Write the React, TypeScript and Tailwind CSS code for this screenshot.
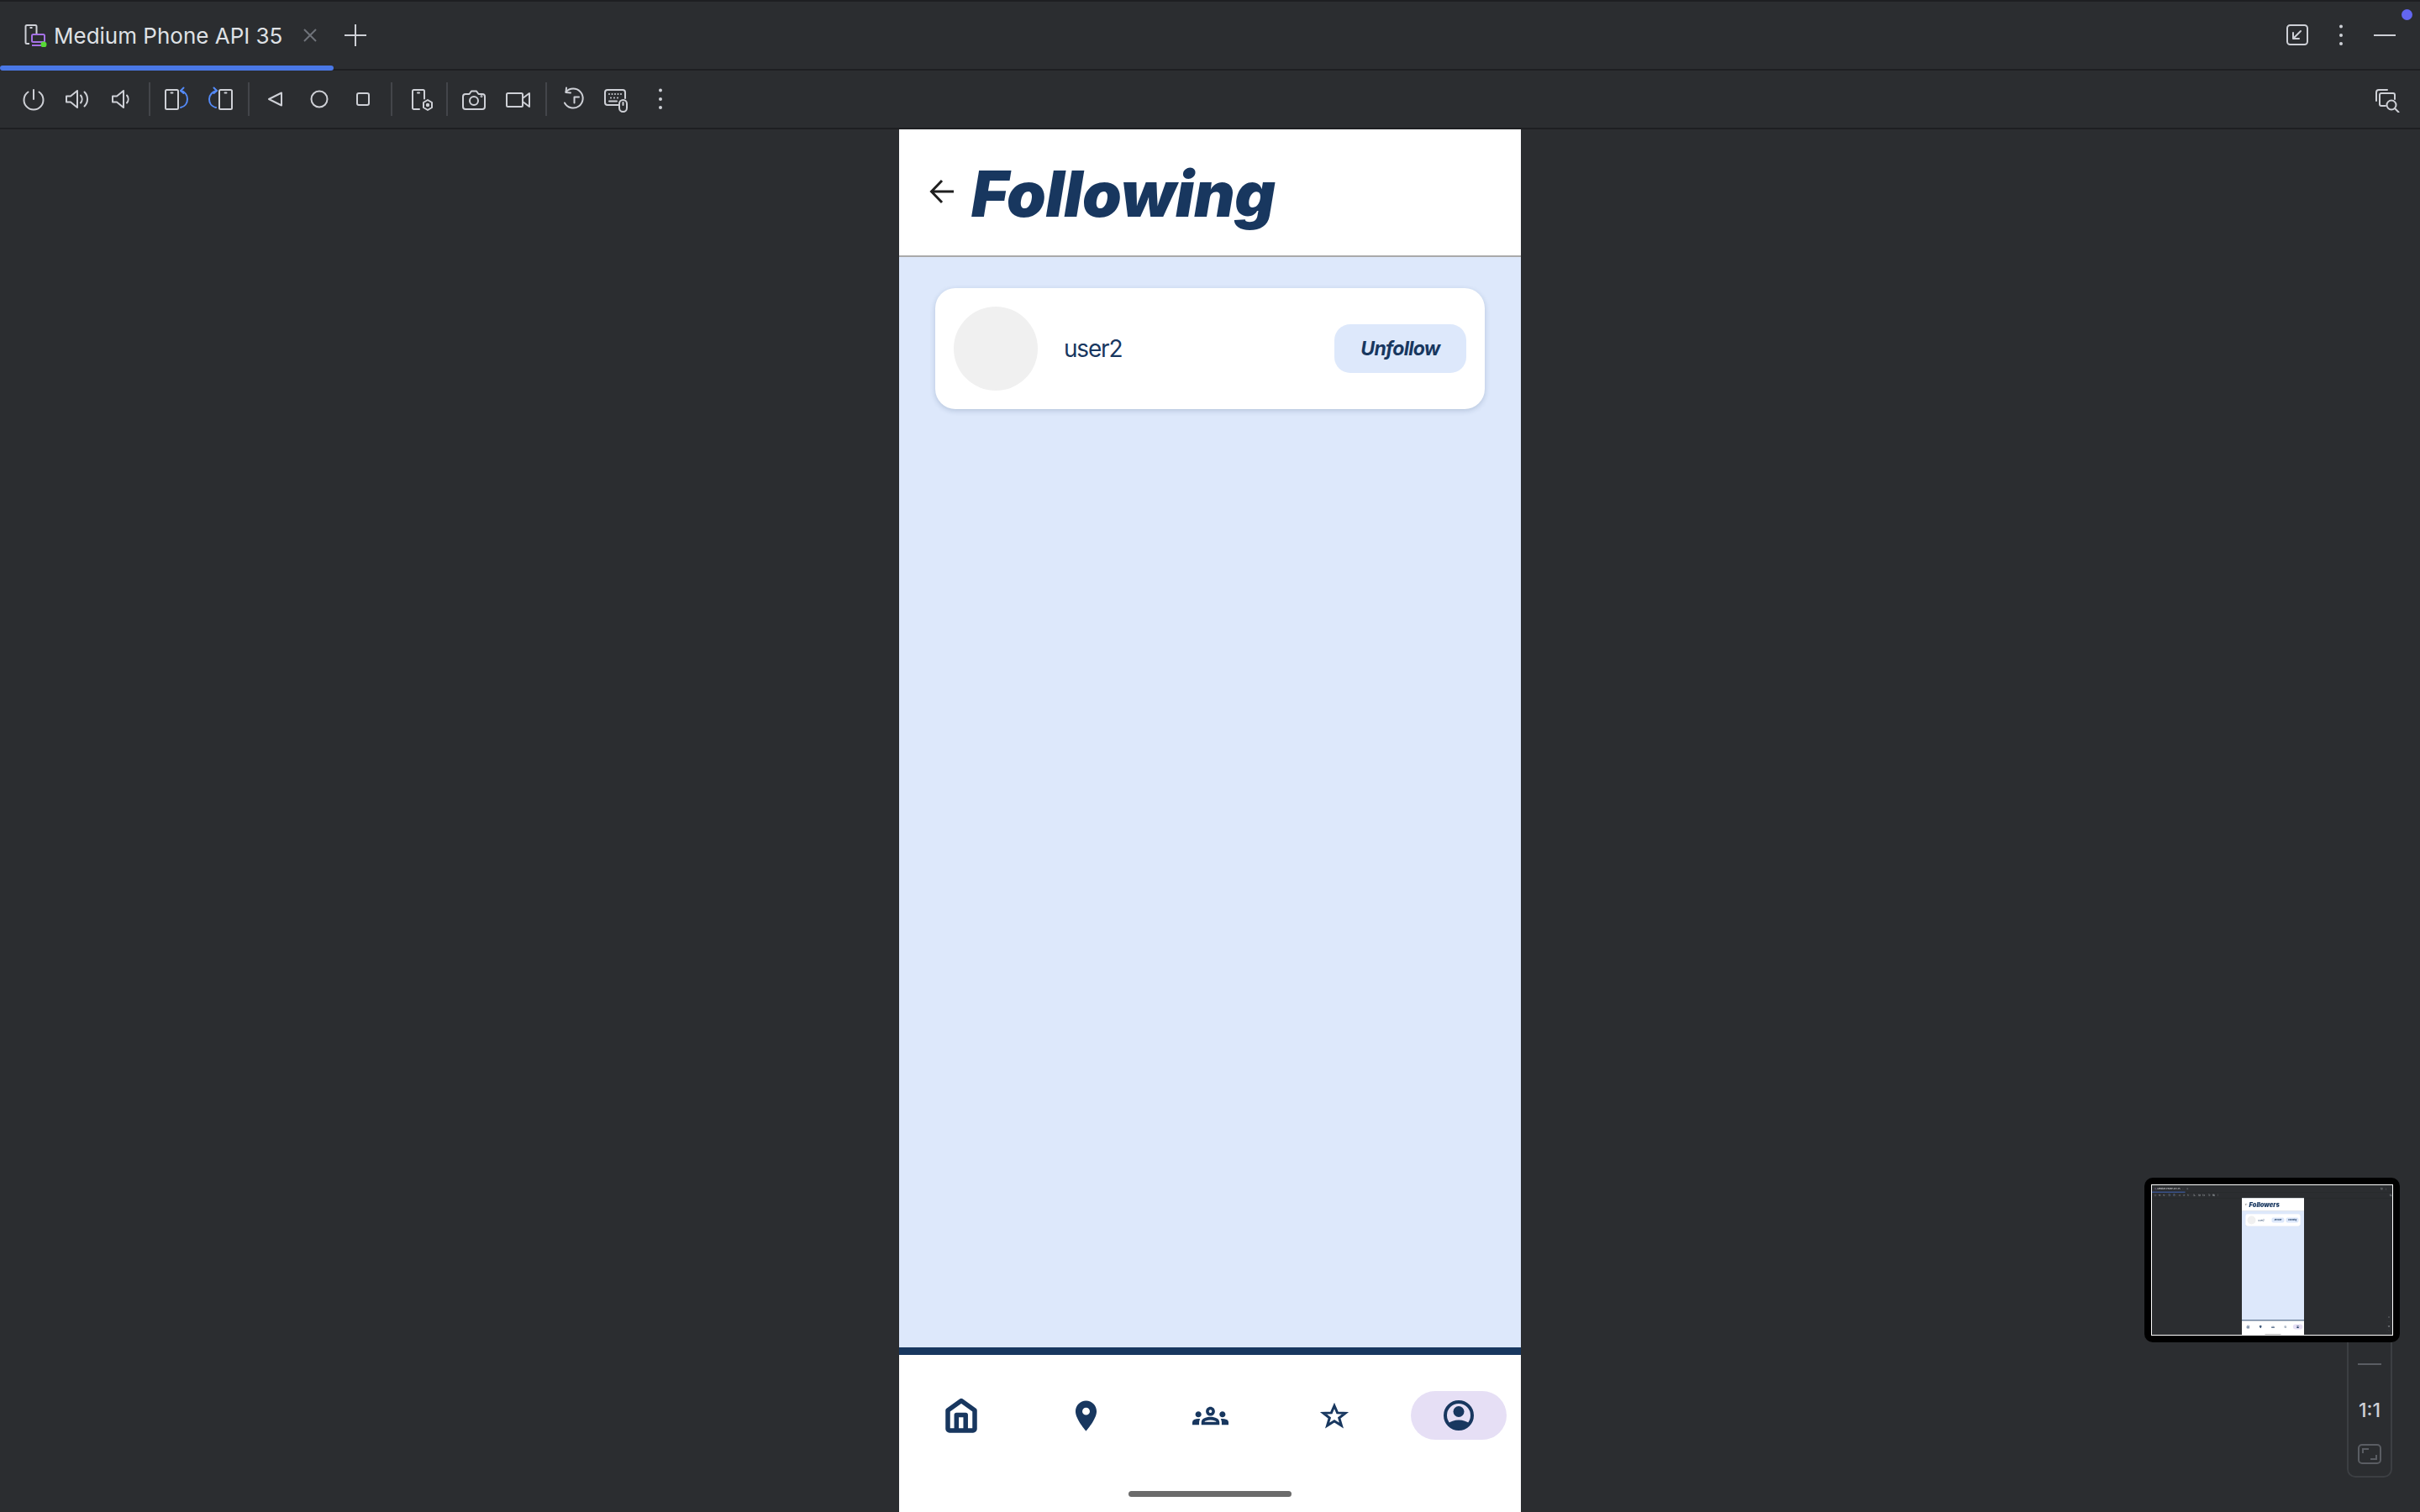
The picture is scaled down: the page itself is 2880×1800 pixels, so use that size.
import React from 'react';
import { MdOutlineGroups, MdPlace } from 'react-icons/md';

const Icon = ({ children, className = '' }: { children: React.ReactNode; className?: string }) => (
  <svg
    viewBox="0 0 32 32"
    fill="none"
    stroke="#ced0d6"
    strokeWidth="2"
    strokeLinecap="round"
    strokeLinejoin="round"
    className={`h-8 w-8 ${className}`}
  >
    {children}
  </svg>
);

const ToolButton = ({ children }: { children: React.ReactNode }) => (
  <div className="flex w-[52px] items-center justify-center">{children}</div>
);

const Separator = () => <div className="ml-[7px] mr-[5px] h-10 w-[2px] bg-[#43454a]" />;

const Dots = () => (
  <Icon>
    <g fill="#ced0d6" stroke="none">
      <circle cx="16" cy="5.5" r="2" />
      <circle cx="16" cy="16" r="2" />
      <circle cx="16" cy="26" r="2" />
    </g>
  </Icon>
);

const Toolbar = () => (
  <div className="flex h-[68px] items-center pl-[14px]">
    <ToolButton>
      <Icon>
        <path d="M16 5v11" />
        <path d="M9.5 7.5a11.5 11.5 0 1 0 13 0" />
      </Icon>
    </ToolButton>
    <ToolButton>
      <Icon>
        <path d="M3 12.5v7h5l8 6.5V6l-8 6.5z" />
        <path d="M20 11.5a7 7 0 0 1 0 9" />
        <path d="M24.5 7.5a12 12 0 0 1 0 17" />
      </Icon>
    </ToolButton>
    <ToolButton>
      <Icon>
        <path d="M6 12.5v7h5l8 6.5V6l-8 6.5z" />
        <path d="M23 11.5a7 7 0 0 1 0 9" />
      </Icon>
    </ToolButton>
    <Separator />
    <ToolButton>
      <Icon>
        <rect x="3" y="5" width="15" height="23" rx="1.5" />
        <path d="M9.5 8.5h2" />
        <path d="M21 6c5 1 8 5 8 10s-3 9-8 10" stroke="#548af7" />
        <path d="M24.5 2.5L21 6l3.5 3" stroke="#548af7" />
      </Icon>
    </ToolButton>
    <ToolButton>
      <Icon>
        <rect x="15" y="5" width="15" height="23" rx="1.5" />
        <path d="M21.5 8.5h2" />
        <path d="M12 6C7 7 3 11 3 16s3 9 8 10" stroke="#548af7" />
        <path d="M8.5 2.5L12 6l-3.5 3" stroke="#548af7" />
      </Icon>
    </ToolButton>
    <Separator />
    <ToolButton>
      <Icon>
        <path d="M8 16l15-7.5v15z" />
      </Icon>
    </ToolButton>
    <ToolButton>
      <Icon>
        <circle cx="16" cy="16" r="9.5" />
      </Icon>
    </ToolButton>
    <ToolButton>
      <Icon>
        <rect x="9" y="9" width="14" height="14" rx="2" />
      </Icon>
    </ToolButton>
    <Separator />
    <ToolButton>
      <Icon className="translate-x-[3px]">
        <path d="M14 28H7.5A1.5 1.5 0 0 1 6 26.5v-20A1.5 1.5 0 0 1 7.5 5h11A1.5 1.5 0 0 1 20 6.5v9" />
        <path d="M12 8.5h2" />
        <path d="M24 17l5 3v6l-5 3-5-3v-6z" />
        <circle cx="24" cy="23" r="1.2" fill="#ced0d6" />
      </Icon>
    </ToolButton>
    <Separator />
    <ToolButton>
      <Icon>
        <path d="M6 10h4.5L13 6.5h6l2.5 3.5H26a3 3 0 0 1 3 3v12a3 3 0 0 1-3 3H6a3 3 0 0 1-3-3V13a3 3 0 0 1 3-3z" />
        <circle cx="16" cy="18" r="5" />
        <circle cx="25" cy="12.5" r="0.5" />
      </Icon>
    </ToolButton>
    <ToolButton>
      <Icon>
        <rect x="3" y="9" width="19" height="16" rx="1.5" />
        <path d="M22 15l8-6v16l-8-6" />
      </Icon>
    </ToolButton>
    <Separator />
    <ToolButton>
      <Icon>
        <path d="M7.5 7.5a11.5 11.5 0 1 1-1.5 13" />
        <path d="M8 2.5L7.5 8l5.500.5" />
        <path d="M17.5 20.5v-7H23" />
      </Icon>
    </ToolButton>
    <ToolButton>
      <Icon>
        <path d="M18 23H5a3 3 0 0 1-3-3V8a3 3 0 0 1 3-3h18a3 3 0 0 1 3 3v7" />
        <path d="M7 10h0M10.5 10h0M14 10h0M17.5 10h0M21 10h0M9 14.5h0M13 14.5h0M17 14.5h0M7 18.5h9" />
        <rect x="19" y="17" width="9" height="14" rx="4.5" />
        <path d="M23.5 20v3" />
      </Icon>
    </ToolButton>
    <ToolButton>
      <Dots />
    </ToolButton>
    <div className="ml-auto mr-[24px]">
      <Icon>
        <path d="M17 5H7a3 3 0 0 0-3 3v10" />
        <path d="M26 16v-5a2 2 0 0 0-2-2H10a2 2 0 0 0-2 2v11a2 2 0 0 0 2 2h5" />
        <circle cx="22" cy="23" r="5.5" />
        <path d="M26 27l4.5 4.5" />
      </Icon>
    </div>
  </div>
);

const TabBar = () => (
  <div className="relative flex h-20 items-center">
    <svg viewBox="0 0 28 28" fill="none" strokeWidth="2" strokeLinejoin="round" className="ml-[29px] h-7 w-7">
      <path d="M6 24H3a1.5 1.5 0 0 1-1.5-1.5v-19A1.5 1.5 0 0 1 3 2h10a1.5 1.5 0 0 1 1.5 1.5V12" stroke="#ced0d6" />
      <path d="M6.5 5h3" stroke="#ced0d6" />
      <rect x="9" y="13" width="15" height="9" rx="1.5" stroke="#a571e6" />
      <path d="M9 26h15" stroke="#a571e6" />
      <circle cx="23" cy="25" r="3.5" fill="#57d936" stroke="none" />
    </svg>
    <span className="ml-[7px] text-[26px] text-[#dfe1e5]">Medium Phone API 35</span>
    <svg viewBox="0 0 16 16" stroke="#6f737a" strokeWidth="2" className="ml-[25px] h-4 w-4">
      <path d="M1 1l14 14M15 1L1 15" />
    </svg>
    <svg viewBox="0 0 26 26" stroke="#ced0d6" strokeWidth="2" className="ml-[33px] h-[26px] w-[26px]">
      <path d="M13 0v26M0 13h26" />
    </svg>
    <div className="ml-auto mr-[29px] flex items-center gap-5">
      <Icon>
        <rect x="4" y="4" width="24" height="23" rx="3.5" />
        <path d="M20 11l-9 9M11 13v7h7" />
      </Icon>
      <Dots />
      <svg viewBox="0 0 26 2" stroke="#ced0d6" strokeWidth="2" className="ml-[3px] h-[2px] w-[26px]">
        <path d="M0 1h26" />
      </svg>
    </div>
    <div className="absolute bottom-[-2px] left-0 h-[6px] w-[397px] rounded-full bg-[#4a78e6]" />
    <div className="absolute right-[9px] top-[9px] h-[13px] w-[13px] rounded-full bg-[#6366f1]" />
  </div>
);

const HomeIcon = () => (
  <svg viewBox="0 0 38 42" fill="none" stroke="#18375f" strokeWidth="5.5" strokeLinejoin="round" className="h-[42px] w-[38px]">
    <path d="M19 3.5L35 15v22a2 2 0 0 1-2 2H5a2 2 0 0 1-2-2V15z" />
    <path d="M13.3 39V20.5h10.9V39" />
  </svg>
);

const StarIcon = () => (
  <svg viewBox="0 0 36 34" fill="none" stroke="#18375f" strokeWidth="3" strokeMiterlimit="10" className="h-[34px] w-9">
    <path d="M18 5.500l3.600 8.400 9.400.4-7.300 5.700 2.700 9.100-8.400-5.300-8.400 5.300 2.700-9.100L5 14.300l9.400-.4z" />
  </svg>
);

const ProfileIcon = () => (
  <svg viewBox="0 0 36 36" fill="#18375f" className="h-9 w-9">
    <circle cx="18" cy="18" r="16" fill="none" stroke="#18375f" strokeWidth="4" />
    <circle cx="18" cy="13.5" r="6.5" />
    <path d="M5 28c3-3 8-4.5 13-4.5S28 25 31 28c-3 4-8 6-13 6S8 32 5 28z" />
  </svg>
);

const BottomNav = () => (
  <div className="h-[196px] border-t-[9px] border-[#18375f] bg-white">
    <div className="grid h-[58px] translate-y-[43px] grid-cols-5 items-center justify-items-center">
      <HomeIcon />
      <MdPlace size={43} color="#18375f" />
      <MdOutlineGroups size={43} color="#18375f" />
      <StarIcon />
      <div className="flex h-[58px] w-[114px] items-center justify-center rounded-full bg-[#e6dff5]">
        <ProfileIcon />
      </div>
    </div>
    <div className="mx-auto mt-[104px] h-[7px] w-[194px] rounded-full bg-[#6b6b6b]" />
  </div>
);

const ActionButton = ({ label, width }: { label: string; width: string }) => (
  <button className={`flex h-[58px] items-center justify-center rounded-[19px] bg-[#dde8fb] text-[23px] font-bold italic tracking-[-0.7px] text-[#18375f] ${width}`}>
    {label}
  </button>
);

const PhoneScreen = ({ title, actions }: { title: string; actions: { label: string; width: string }[] }) => (
  <div className="mx-auto flex w-[740px] flex-1 flex-col bg-[#dde8fb]">
    <div className="flex h-[152px] items-center border-b-2 border-[#aaaaaa] bg-white pl-[36px]">
      <svg viewBox="0 0 30 30" fill="none" stroke="#1f1f1f" strokeWidth="3" className="mb-[3px] h-[30px] w-[30px]">
        <path d="M29 15H3M15 2L2.5 15 15 28" />
      </svg>
      <h1 className="ml-[20px] mt-[2px] text-[75px] font-black italic leading-none tracking-[-0.4px] text-[#18375f]">{title}</h1>
    </div>
    <div className="flex-1 px-[43px] pt-[37px]">
      <div className="flex h-[144px] items-center rounded-[24px] bg-white pl-[22px] pr-[22px] shadow-[0_2px_6px_rgba(24,55,95,0.2)]">
        <div className="h-[100px] w-[100px] rounded-full bg-[#f0f0f0]" />
        <span className="ml-[31px] text-[28px] tracking-[-1.2px] text-[#18375f]">user2</span>
        <div className="ml-auto flex gap-5">
          {actions.map((action) => (
            <ActionButton key={action.label} label={action.label} width={action.width} />
          ))}
        </div>
      </div>
    </div>
    <BottomNav />
  </div>
);

const ZoomPanel = () => (
  <div className="absolute bottom-[41px] right-[33px] flex h-[220px] w-[54px] flex-col items-center rounded-[10px] border-2 border-[#3c3f43]">
    <svg viewBox="0 0 26 26" stroke="#ced0d6" strokeWidth="2" className="mt-[16px] h-[26px] w-[26px]">
      <path d="M13 2v22M2 13h22" />
    </svg>
    <div className="mt-[40px] h-[2px] w-7 bg-[#5a5d63]" />
    <span className="mt-[40px] text-[23px] font-medium leading-[28px] text-[#ced0d6]">1:1</span>
    <svg viewBox="0 0 28 24" fill="none" stroke="#5a5d63" strokeWidth="2" className="mt-[26px] h-6 w-7">
      <rect x="1" y="1" width="26" height="22" rx="4" />
      <path d="M6 11V6h7M22 13v5h-7" />
    </svg>
  </div>
);

const Desktop = ({ title, actions, minimap }: { title: string; actions: { label: string; width: string }[]; minimap?: boolean }) => (
  <div className="relative flex h-[1800px] w-[2880px] flex-col overflow-hidden border-t-2 border-[#1e1f22] bg-[#2b2d30] font-[Inter,sans-serif]">
    <div className="border-b-2 border-[#1e1f22]">
      <TabBar />
    </div>
    <div className="border-b-2 border-[#1e1f22]">
      <Toolbar />
    </div>
    <PhoneScreen title={title} actions={actions} />
    <ZoomPanel />
    {minimap && (
      <div className="absolute bottom-[202px] right-[24px] rounded-[10px] bg-black p-2">
        <div className="h-[180px] w-[288px] overflow-hidden border border-white">
          <div className="origin-top-left scale-[0.1] blur-[3px]">
            <Desktop
              title="Followers"
              actions={[
                { label: 'Remove', width: 'w-[150px]' },
                { label: 'Following', width: 'w-[150px]' },
              ]}
            />
          </div>
        </div>
      </div>
    )}
  </div>
);

export default function App() {
  return <Desktop title="Following" actions={[{ label: 'Unfollow', width: 'w-[157px]' }]} minimap />;
}
